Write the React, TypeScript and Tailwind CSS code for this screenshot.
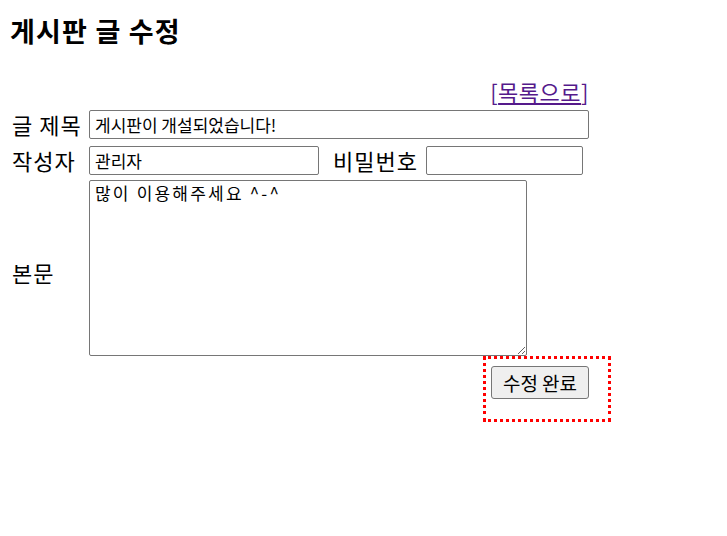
import React from 'react';

const font = { fontFamily: '"Noto Sans CJK KR", "Noto Sans", sans-serif' };

export default function App() {
    return (
        <div className="w-[727px] h-[536px] bg-white text-black font-['Noto_Sans_CJK_KR',sans-serif]">
            <h1 className="pl-[10px] pt-[14px] text-[27px] font-bold leading-[34px] tracking-[1.2px]">게시판 글 수정</h1>

            {/* list link */}
            <div className="mt-[31px] w-[589px] text-right text-[22px] leading-[24px] tracking-[0.5px] text-[#551a8b]">
                [<a href="#" className="underline">목록으로</a>]
            </div>

            {/* title row */}
            <div className="mt-[7px] flex items-center">
                <label className="w-[89px] pl-[12px] text-[22px] leading-[29px] tracking-[1px]">글 제목</label>
                <input
                    type="text"
                    defaultValue="게시판이 개설되었습니다!"
                    className="w-[500px] h-[29px] border border-[#767676] rounded-[2px] px-[5px] text-[17px] outline-none"
                />
            </div>

            {/* author row */}
            <div className="mt-[7px] flex items-center">
                <label className="w-[89px] pl-[12px] text-[22px] leading-[29px] tracking-[1px]">작성자</label>
                <input
                    type="text"
                    defaultValue="관리자"
                    className="w-[230px] h-[29px] border border-[#767676] rounded-[2px] px-[5px] text-[17px] outline-none"
                />
                <label className="ml-[14px] w-[93px] text-[22px] leading-[29px] tracking-[1px]">비밀번호</label>
                <input
                    type="password"
                    className="w-[157px] h-[29px] border border-[#767676] rounded-[2px] px-[5px] text-[17px] outline-none"
                />
            </div>

            {/* body row */}
            <div className="mt-[5px] flex items-center">
                <label className="w-[89px] pl-[12px] pt-[9px] text-[22px] leading-[29px] tracking-[1px]">본문</label>
                <textarea
                    defaultValue="많이 이용해주세요 ^-^"
                    className="w-[438px] h-[176px] border border-[#767676] rounded-[2px] px-[5px] py-[2px] text-[17px] leading-[20px] tracking-[2.2px] outline-none font-['Noto_Sans_CJK_KR',monospace]"
                />
            </div>

            {/* submit */}
            <div className="flex">
                <div className="ml-[483px] w-[128px] h-[66px] border-[3px] border-dotted border-[#ff0000] pl-[5px] pt-[7px]">
                    <button
                        type="button"
                        style={font}
                        className="w-[98px] h-[33px] bg-[#efefef] border border-[#767676] rounded-[3px] text-[19px] leading-none text-black"
                    >
                        수정 완료
                    </button>
                </div>
            </div>
        </div>
    );
}
